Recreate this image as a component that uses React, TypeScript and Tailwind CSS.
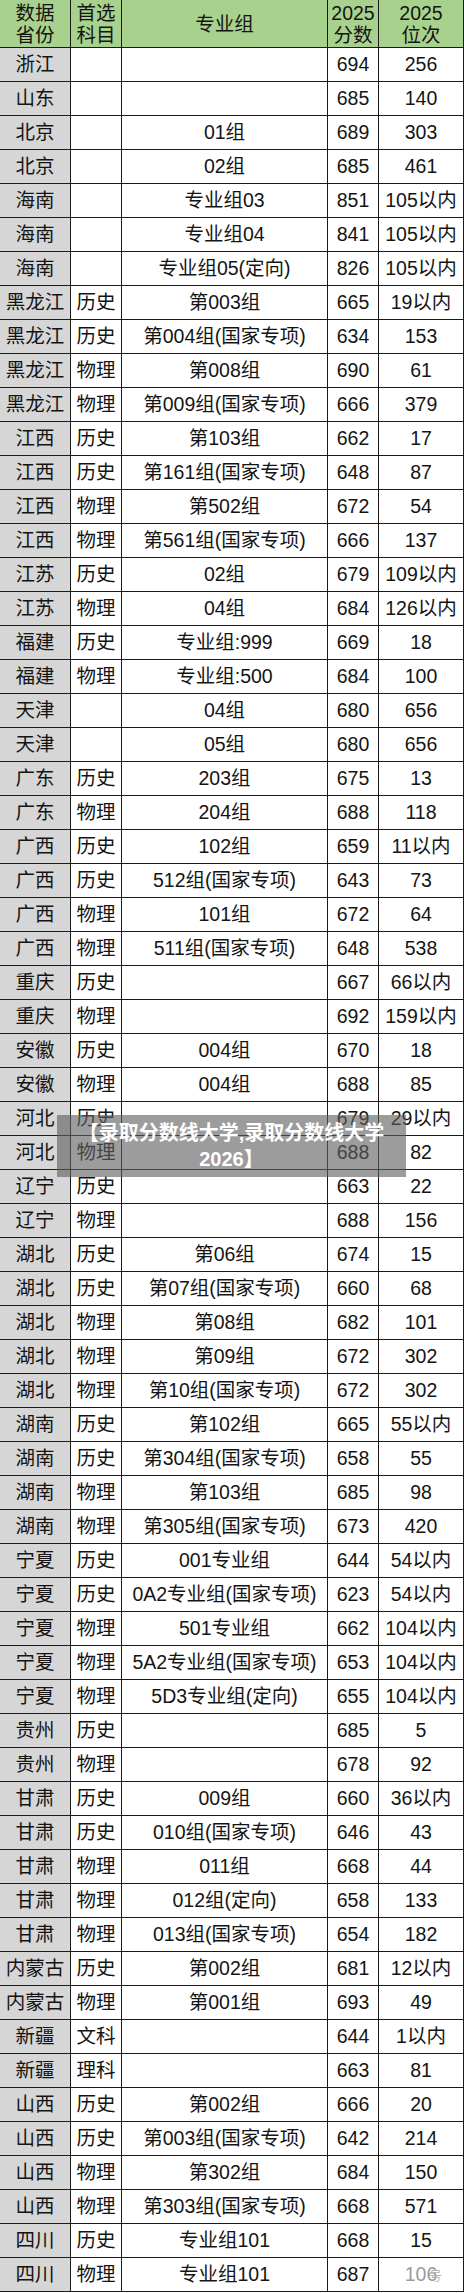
import React from "react";

type Row = [string, string, string, string, string];

const ROWS: Row[] = [
  ["浙江", "", "", "694", "256"],
  ["山东", "", "", "685", "140"],
  ["北京", "", "01组", "689", "303"],
  ["北京", "", "02组", "685", "461"],
  ["海南", "", "专业组03", "851", "105以内"],
  ["海南", "", "专业组04", "841", "105以内"],
  ["海南", "", "专业组05(定向)", "826", "105以内"],
  ["黑龙江", "历史", "第003组", "665", "19以内"],
  ["黑龙江", "历史", "第004组(国家专项)", "634", "153"],
  ["黑龙江", "物理", "第008组", "690", "61"],
  ["黑龙江", "物理", "第009组(国家专项)", "666", "379"],
  ["江西", "历史", "第103组", "662", "17"],
  ["江西", "历史", "第161组(国家专项)", "648", "87"],
  ["江西", "物理", "第502组", "672", "54"],
  ["江西", "物理", "第561组(国家专项)", "666", "137"],
  ["江苏", "历史", "02组", "679", "109以内"],
  ["江苏", "物理", "04组", "684", "126以内"],
  ["福建", "历史", "专业组:999", "669", "18"],
  ["福建", "物理", "专业组:500", "684", "100"],
  ["天津", "", "04组", "680", "656"],
  ["天津", "", "05组", "680", "656"],
  ["广东", "历史", "203组", "675", "13"],
  ["广东", "物理", "204组", "688", "118"],
  ["广西", "历史", "102组", "659", "11以内"],
  ["广西", "历史", "512组(国家专项)", "643", "73"],
  ["广西", "物理", "101组", "672", "64"],
  ["广西", "物理", "511组(国家专项)", "648", "538"],
  ["重庆", "历史", "", "667", "66以内"],
  ["重庆", "物理", "", "692", "159以内"],
  ["安徽", "历史", "004组", "670", "18"],
  ["安徽", "物理", "004组", "688", "85"],
  ["河北", "历史", "", "679", "29以内"],
  ["河北", "物理", "", "688", "82"],
  ["辽宁", "历史", "", "663", "22"],
  ["辽宁", "物理", "", "688", "156"],
  ["湖北", "历史", "第06组", "674", "15"],
  ["湖北", "历史", "第07组(国家专项)", "660", "68"],
  ["湖北", "物理", "第08组", "682", "101"],
  ["湖北", "物理", "第09组", "672", "302"],
  ["湖北", "物理", "第10组(国家专项)", "672", "302"],
  ["湖南", "历史", "第102组", "665", "55以内"],
  ["湖南", "历史", "第304组(国家专项)", "658", "55"],
  ["湖南", "物理", "第103组", "685", "98"],
  ["湖南", "物理", "第305组(国家专项)", "673", "420"],
  ["宁夏", "历史", "001专业组", "644", "54以内"],
  ["宁夏", "历史", "0A2专业组(国家专项)", "623", "54以内"],
  ["宁夏", "物理", "501专业组", "662", "104以内"],
  ["宁夏", "物理", "5A2专业组(国家专项)", "653", "104以内"],
  ["宁夏", "物理", "5D3专业组(定向)", "655", "104以内"],
  ["贵州", "历史", "", "685", "5"],
  ["贵州", "物理", "", "678", "92"],
  ["甘肃", "历史", "009组", "660", "36以内"],
  ["甘肃", "历史", "010组(国家专项)", "646", "43"],
  ["甘肃", "物理", "011组", "668", "44"],
  ["甘肃", "物理", "012组(定向)", "658", "133"],
  ["甘肃", "物理", "013组(国家专项)", "654", "182"],
  ["内蒙古", "历史", "第002组", "681", "12以内"],
  ["内蒙古", "物理", "第001组", "693", "49"],
  ["新疆", "文科", "", "644", "1以内"],
  ["新疆", "理科", "", "663", "81"],
  ["山西", "历史", "第002组", "666", "20"],
  ["山西", "历史", "第003组(国家专项)", "642", "214"],
  ["山西", "物理", "第302组", "684", "150"],
  ["山西", "物理", "第303组(国家专项)", "668", "571"],
  ["四川", "历史", "专业组101", "668", "15"],
  ["四川", "物理", "专业组101", "687", "106"],
];

const cell = "flex items-center justify-center border-b border-r border-[#1a1a1a] whitespace-nowrap";

function HeaderCell({ lines }: { lines: string[] }) {
  return (
    <div className={`${cell} h-[48px] flex-col bg-[#a9d18e] leading-[22px]`}>
      {lines.map((l) => (
        <span key={l}>{l}</span>
      ))}
    </div>
  );
}

export default function App() {
  return (
    <div
      className="relative w-[464px] bg-white text-[19.5px] text-[#141414]"
      style={{ fontFamily: '"Liberation Sans", "Noto Sans CJK SC", sans-serif' }}
    >
      <div className="grid grid-cols-[71px_51px_206px_51px_85px]">
        <HeaderCell lines={["数据", "省份"]} />
        <HeaderCell lines={["首选", "科目"]} />
        <HeaderCell lines={["专业组"]} />
        <HeaderCell lines={["2025", "分数"]} />
        <HeaderCell lines={["2025", "位次"]} />

        {ROWS.map((r, i) => {
          const last = i === ROWS.length - 1;
          return (
            <React.Fragment key={i}>
              <div className={`${cell} h-[34px] bg-[#d6d6d6]`}>{r[0]}</div>
              <div className={`${cell} h-[34px]`}>{r[1]}</div>
              <div className={`${cell} h-[34px]`}>{r[2]}</div>
              <div className={`${cell} h-[34px]`}>{r[3]}</div>
              <div className={`${cell} relative h-[34px]`}>
                {last ? (
                  <>
                    <span className="text-[#9a9a9a]">{r[4]}</span>
                    <span className="absolute left-[50px] top-[8px] text-[13px] text-[#b5b5b5]">号</span>
                  </>
                ) : (
                  r[4]
                )}
              </div>
            </React.Fragment>
          );
        })}
      </div>

      {/* watermark band */}
      <div className="absolute left-[57px] top-[1115px] flex h-[62px] w-[349px] flex-col items-center justify-center bg-[rgba(95,95,95,0.62)] text-[20px] font-bold leading-[26px] text-white">
        <span>【录取分数线大学,录取分数线大学</span>
        <span>2026】</span>
      </div>
    </div>
  );
}
